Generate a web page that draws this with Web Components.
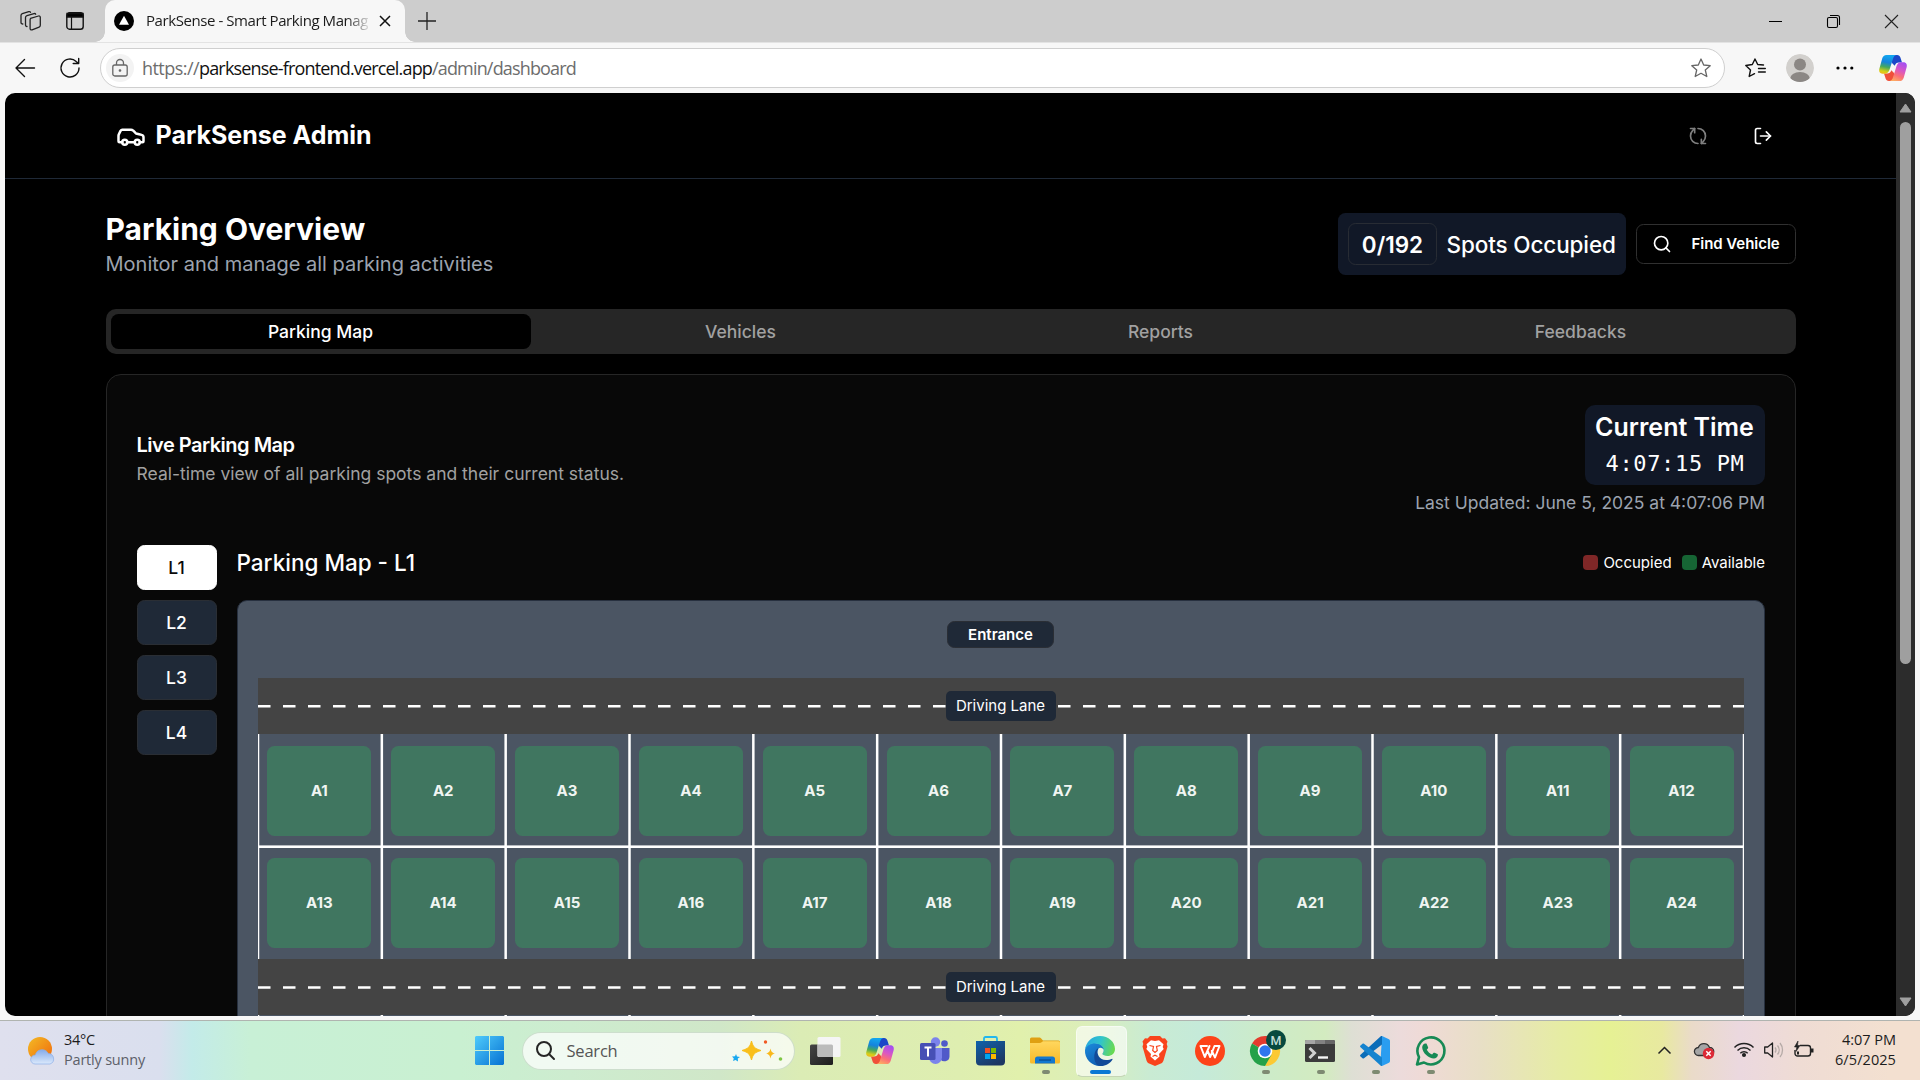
<!DOCTYPE html>
<html lang="en">
<head>
<meta charset="utf-8">
<title>ParkSense - Smart Parking Management</title>
<style>
html,body{margin:0;padding:0;width:1920px;height:1080px;overflow:hidden;background:#f7f7f7}
</style>
</head>
<body>
<desk-top></desk-top>
<script>
function define(name, css, html, ready) {
  const t = document.createElement('template');
  t.innerHTML = '<style>*{box-sizing:border-box}svg{display:block;flex:none;overflow:visible}' + css + '</style>' + html;
  customElements.define(name, class extends HTMLElement {
    connectedCallback() {
      if (this.shadowRoot) return;
      this.attachShadow({mode: 'open'}).appendChild(t.content.cloneNode(true));
      if (ready) ready.call(this, this.shadowRoot);
    }
  });
}

/* A line of text whose letter spacing is tuned so that it spans the width in "w". */
define('fit-text', ':host{display:block;white-space:pre;flex:none}span{display:inline-block}', '<span><slot></slot></span>', function (r) {
  const s = r.querySelector('span'), w = +this.getAttribute('w');
  const n = this.textContent.length;
  s.style.letterSpacing = ((w - s.getBoundingClientRect().width) / n) + 'px';
  this.style.width = w + 'px';
});

const copilot = id => `<svg width="28" height="26" viewBox="0 0 28 26">
<defs><linearGradient id="${id}a" x1="0.3" y1="0" x2="0.1" y2="1"><stop offset="0" stop-color="#12a5ee"/><stop offset=".35" stop-color="#1583dd"/><stop offset=".6" stop-color="#43a85f"/><stop offset=".85" stop-color="#d8cf16"/><stop offset="1" stop-color="#f3b41b"/></linearGradient>
<linearGradient id="${id}b" x1="0.7" y1="0" x2="0.3" y2="1"><stop offset="0" stop-color="#a54ff0"/><stop offset=".4" stop-color="#d957c4"/><stop offset=".7" stop-color="#fb6f77"/><stop offset="1" stop-color="#fdab62"/></linearGradient></defs>
<path d="M12 0h6.200c1.600 0 2.700 1 3.200 2.500l1.600 5h-3c-2.300 0-3.600 1.200-4.300 3.300L13 8z" fill="#1c47c8"/>
<path d="M16 26H9.800c-1.600 0-2.700-1-3.200-2.500L5 18.500h3c2.300 0 3.600-1.200 4.300-3.300L15 18z" fill="#f0503a"/>
<path d="M7.500 0h10c-2 .3-2.900 1.800-3.500 3.800l-3 9.500c-.8 2.500-2 5.400-4.600 5.400H3.500C.9 18.700-.3 16.500.3 14L3.200 3.600C3.900 1.200 5.300 0 7.500 0z" fill="url(#${id}a)"/>
<path d="M20.500 26h-10c2-.3 2.900-1.800 3.500-3.800l3-9.500c.8-2.500 2-5.400 4.600-5.400h2.900c2.600 0 3.800 2.200 3.200 4.700l-2.900 10.400c-.7 2.400-2.100 3.600-4.300 3.600z" fill="url(#${id}b)"/></svg>`;

/* ---------- browser ---------- */
define('browser-tabs', `
:host{display:flex;height:42px;background:#cdcdcd;align-items:center;font:15px "Open Sans","Noto Sans",sans-serif;color:#1b1b1b}
.left{display:flex;width:105px;padding-left:20px;gap:25px;align-items:center}
.tab{display:flex;width:300px;height:42px;background:#f7f7f7;border-radius:10px 10px 0 0;align-items:center;padding:0 0 1px 9px;position:relative}
.tab:before,.tab:after{content:"";position:absolute;bottom:0;width:10px;height:10px}
.tab:before{left:-10px;background:radial-gradient(circle at 0 0,#cdcdcd 9.500px,#f7f7f7 10px)}
.tab:after{right:-10px;background:radial-gradient(circle at 100% 0,#cdcdcd 9.500px,#f7f7f7 10px)}
.t{margin-left:12px;width:222px;overflow:hidden;padding-bottom:2px;-webkit-mask:linear-gradient(90deg,#000 200px,transparent 226px);mask:linear-gradient(90deg,#000 200px,transparent 226px)}
.x{margin-left:11px}.plus{margin-left:13px;margin-bottom:1px}
.left svg{margin-bottom:1px}
.win{margin-left:auto;display:flex;gap:45px;padding-right:22px;align-items:center}`,
`<div class="left">
<svg width="21" height="20" viewBox="0 0 21 20" fill="none" stroke="#222" stroke-width="1.300" stroke-linejoin="round" stroke-linecap="round"><path d="M10.500 7.300l8-2.300c1-.3 1.800.3 1.800 1.300v8c0 1-.4 1.500-1.200 1.800l-7 2.700c-1.200.4-2-.2-2-1.200V8.800c0-.8.2-1.300.9-1.500z"/><path d="M7 15.500c-1 0-1.500-.6-1.500-1.500V6.500C5.500 5.500 6 5 7 4.700L14 2.600c.8-.2 1.400 0 1.700.6"/><path d="M2.800 13c-1.200 0-1.800-.6-1.800-1.500V4.400C1 3.500 1.500 3 2.300 2.700l6.500-2c.8-.2 1.400 0 1.700.6"/></svg>
<svg width="18" height="18" viewBox="0 0 18 18" fill="none" stroke="#111" stroke-width="1.400"><rect x=".8" y=".8" width="16.400" height="16.400" rx="2.800"/><path d="M1 1.500h16V5H1z" fill="#000"/><path d="M5.500 5v12" stroke-width="1.200"/></svg></div>
<div class="tab"><svg width="20" height="20" viewBox="0 0 20 20"><circle cx="10" cy="10" r="10"/><path d="M10 4.800l5 9H5z" fill="#fff"/></svg>
<div class="t"><fit-text w="222">ParkSense - Smart Parking Manag</fit-text></div>
<svg class="x" width="12" height="12" viewBox="0 0 12 12" stroke="#111" stroke-width="1.500"><path d="M1 1l10 10M11 1L1 11"/></svg></div>
<svg class="plus" width="18" height="18" viewBox="0 0 18 18" stroke="#222" stroke-width="1.300"><path d="M9 0v18M0 9h18"/></svg>
<div class="win"><svg width="13" height="13" viewBox="0 0 13 13" stroke="#000" stroke-width="1"><path d="M0 6.500h13"/></svg>
<svg width="13" height="13" viewBox="0 0 13 13" fill="none" stroke="#000" stroke-width="1.100"><rect x=".5" y="2.500" width="10" height="10" rx="1.500"/><path d="M3 .5h7.500c1.200 0 2 .8 2 2V10"/></svg>
<svg width="13" height="13" viewBox="0 0 13 13" stroke="#222" stroke-width="1.100"><path d="M0 0l13 13M13 0L0 13"/></svg></div>`);

define('browser-bar', `
:host{display:flex;height:51px;background:#f7f7f7;align-items:center;padding-left:15px;border-top:1px solid #e3e3e3;font:18px "Open Sans","Noto Sans",sans-serif;color:#111}
.re{margin-left:25px}
.url{margin-left:20px;width:1625px;height:40px;border:1px solid #cfcfcf;border-radius:20px;background:#fff;display:flex;align-items:center;padding:0 13px 0 5px}
.url fit-text{padding-bottom:1px}
.lock{width:28px;height:28px;border-radius:50%;background:#f3f3f3;display:flex;align-items:center;justify-content:center;margin-right:8px}
.g{color:#6d6d6d}.star{margin-left:auto}
.fav{margin-left:20px}.av{margin-left:20px}.dots{margin-left:22px}.cp{margin-left:25px;display:flex}`,
`<svg width="20" height="20" viewBox="0 0 20 20" fill="none" stroke="#111" stroke-width="1.400" stroke-linecap="round" stroke-linejoin="round"><path d="M19.500 10H1M9.500 1.500L1 10l8.500 8.500"/></svg>
<svg class="re" width="20" height="20" viewBox="0 0 20 20" fill="none" stroke="#111" stroke-width="1.400" stroke-linecap="round" stroke-linejoin="round"><path d="M19 10a9 9 0 1 1-2.800-6.500L18.500 5.500M18.700.5v5h-5.500"/></svg>
<div class="url"><div class="lock"><svg width="16" height="18" viewBox="0 0 16 18" fill="none" stroke="#666" stroke-width="1.300"><rect x=".8" y="6" width="14.400" height="11" rx="2"/><path d="M4.500 6V4a3.500 3.500 0 0 1 7 0v2"/><circle cx="8" cy="11.500" r=".7" fill="#666"/></svg></div>
<fit-text w="57" class="g">https://</fit-text><fit-text w="233">parksense-frontend.vercel.app</fit-text><fit-text w="144" class="g">/admin/dashboard</fit-text>
<svg class="star" width="20" height="20" viewBox="0 0 20 20" fill="none" stroke="#666" stroke-width="1.300" stroke-linejoin="round"><path d="M10 1l2.700 6 6.500.7-4.900 4.300 1.500 6.500L10 15.300 4.200 18.500l1.500-6.500L.8 7.700l6.500-.7z"/></svg></div>
<svg class="fav" width="21" height="20" viewBox="0 0 21 20" fill="none" stroke="#111" stroke-width="1.400" stroke-linejoin="round" stroke-linecap="round"><path d="M18.500 7l-5.800-.5L10 1 7.300 6.500.8 7.500 5.500 12 4.200 18.500 9.500 15.700M13.500 10.500h6.800M13.500 14h6.800"/></svg>
<svg class="av" width="28" height="28" viewBox="0 0 28 28"><defs><clipPath id="c"><circle cx="14" cy="14" r="14"/></clipPath></defs><g clip-path="url(#c)"><circle cx="14" cy="14" r="14" fill="#d2d0cd"/><circle cx="14" cy="10.500" r="6" fill="#8b8784"/><ellipse cx="14" cy="25" rx="10" ry="7" fill="#8b8784"/></g></svg>
<svg class="dots" width="18" height="4" viewBox="0 0 18 4"><circle cx="2" cy="2" r="1.600"/><circle cx="9" cy="2" r="1.600"/><circle cx="15.800" cy="2" r="1.600"/></svg>
<span class="cp">${copilot('n')}</span>`);

/* ---------- page ---------- */
define('page-header', `
:host{display:flex;height:86px;border-bottom:1px solid #1f2937;align-items:center;padding:0 123px 0 111px;color:#fff}
h1{margin:0 0 1px 9.500px;font:700 25px/35px Inter,sans-serif}
.r{margin-left:auto;display:flex;gap:45px}`,
`<svg width="30" height="30" viewBox="0 0 24 24" fill="none" stroke="#fff" stroke-width="2" stroke-linecap="round" stroke-linejoin="round"><path d="M19 17h2c.6 0 1-.4 1-1v-3c0-.9-.7-1.700-1.500-1.900C18.700 10.600 16 10 16 10s-1.300-1.400-2.200-2.300c-.5-.4-1.100-.7-1.800-.7H5c-.6 0-1.100.4-1.400.9l-1.400 2.900A3.700 3.700 0 0 0 2 12v4c0 .6.4 1 1 1h2"/><circle cx="7" cy="17" r="2"/><path d="M9 17h6"/><circle cx="17" cy="17" r="2"/></svg>
<h1>ParkSense Admin</h1>
<div class="r"><svg width="20" height="20" viewBox="0 0 24 24" fill="none" stroke="#7f7f7f" stroke-width="2" stroke-linecap="round" stroke-linejoin="round"><g transform="rotate(90 12 12)"><path d="M3 12a9 9 0 0 1 9-9 9.750 9.750 0 0 1 6.740 2.740L21 8"/><path d="M21 3v5h-5"/><path d="M21 12a9 9 0 0 1-9 9 9.750 9.750 0 0 1-6.740-2.740L3 16"/><path d="M8 16H3v5"/></g></svg>
<svg width="20" height="20" viewBox="0 0 24 24" fill="none" stroke="#fff" stroke-width="2" stroke-linecap="round" stroke-linejoin="round"><path d="M9 21H5a2 2 0 0 1-2-2V5a2 2 0 0 1 2-2h4"/><path d="M16 17l5-5-5-5"/><path d="M21 12H9"/></svg></div>`);

define('page-title', `
:host{display:flex;align-items:center;height:62px;margin-top:34px;color:#fff}
h2{margin:0 0 0 -.5px;font:700 30px/40px Inter,sans-serif}
p{margin:0 0 0 -.5px;font:400 20px/30px Inter,sans-serif;color:#9ca3af}
.occ{margin-left:auto;height:62px;width:288px;border-radius:7.500px;background:#111827;display:flex;align-items:center;padding-left:10px;gap:9.500px;font:500 22.500px Inter,sans-serif;white-space:nowrap}
.occ span{letter-spacing:-.13px}
.occ b{width:89px;height:42px;border:1px solid #282c34;border-radius:7.500px;display:flex;align-items:center;justify-content:center;font-weight:600}
.find{margin-left:10px;width:160px;height:40px;border:1px solid #303030;border-radius:7.500px;display:flex;align-items:center;padding:0 0 1px 15px;font:600 15px Inter,sans-serif;gap:19.500px;white-space:nowrap;letter-spacing:-.04px}`,
`<div><h2>Parking Overview</h2><p>Monitor and manage all parking activities</p></div>
<div class="occ"><b>0/192</b><span>Spots Occupied</span></div>
<div class="find"><svg width="20" height="20" viewBox="0 0 24 24" fill="none" stroke="#fff" stroke-width="2" stroke-linecap="round"><circle cx="11" cy="11" r="8"/><path d="M21 21l-4.300-4.300"/></svg><span>Find Vehicle</span></div>`);

define('tab-strip', `
:host{display:grid;grid-template-columns:repeat(4,1fr);height:45px;margin-top:34px;background:#262626;border-radius:10px;padding:5px;font:500 17.500px Inter,sans-serif;color:#a1a1a1}
div{display:flex;align-items:center;justify-content:center;border-radius:7.500px;padding-right:1px}
.on{background:#000;color:#fff}`,
`<div class="on">Parking Map</div><div>Vehicles</div><div>Reports</div><div>Feedbacks</div>`);

define('level-button', `
:host{display:flex;width:80px;height:45px;border-radius:7.500px;background:#1f2937;border:1px solid #2a2e34;color:#fff;align-items:center;justify-content:center;font:500 17.500px Inter,sans-serif;padding-right:1px}
:host([on]){background:#fff;color:#0a0a0a;border-color:#fff}`, `<slot></slot>`);

define('drive-lane', `
:host{display:flex;height:56px;background:#444;align-items:center;justify-content:center;position:relative}
svg{position:absolute;left:0;top:0}
span{position:relative;height:30px;width:110px;background:#1f2937;border-radius:5px;color:#fff;font:400 15px Inter,sans-serif;display:flex;align-items:center;justify-content:center;padding:0 1px 1px 0}`,
`<svg width="1486" height="56"><path stroke="#fff" stroke-width="2.500" stroke-dasharray="12.500 12.500"/></svg><span>Driving Lane</span>`,
function (r) { const y = +this.getAttribute('y') + 1.25; r.querySelector('path').setAttribute('d', 'M0 ' + y + 'H1486'); });

define('parking-spot', `
:host{display:flex;width:104px;height:90px;border-radius:7.500px;background:#407660;color:#f0f5f2;align-items:center;justify-content:center;font:700 15px Inter,sans-serif;padding-bottom:1.500px}`, `<slot></slot>`);

define('spot-block', `
:host{display:block;position:relative;height:225px}
svg{position:absolute;left:0;top:0}
.g{display:grid;grid-template-columns:repeat(12,1fr);grid-template-rows:112px 113px;height:225px;position:relative}
.g div{padding:12px 0 0 9.400px}`,
`<svg width="1486" height="225" fill="#fff"></svg><div class="g"></div>`,
function (r) {
  const p = 1486 / 12; let lines = '<rect x="0" y="0" width="1.250" height="225"/><rect x="1484.750" y="0" width="1.250" height="225"/><rect x="0" y="111.400" width="1486" height="2.600"/>';
  for (let i = 1; i < 12; i++) lines += `<rect x="${i * p - 1.25}" y="0" width="2.500" height="225"/>`;
  r.querySelector('svg').innerHTML = lines;
  let cells = '';
  if (!this.hasAttribute('empty')) for (let i = 1; i <= 24; i++) cells += `<div><parking-spot>A${i}</parking-spot></div>`;
  r.querySelector('.g').innerHTML = cells;
});

define('parking-lot', `
:host{display:flex;flex-direction:column;width:1528px;height:500px;background:#4b5563;border:1px solid #27303f;border-radius:10px;padding:20px 20px 0}
.e{align-self:center;width:107px;height:27px;border-radius:7.500px;background:#1f2937;border:1px solid #2a2e35;color:#fff;font:600 15px Inter,sans-serif;display:flex;align-items:center;justify-content:center;margin:0 1px 30px 0;flex:none}
drive-lane,spot-block{flex:none}`,
`<div class="e">Entrance</div><drive-lane y="27"></drive-lane><spot-block></spot-block><drive-lane y="27.300"></drive-lane><spot-block empty></spot-block>`);

define('map-card', `
:host{display:block;height:800px;margin-top:20px;background:#080808;border:1px solid #262626;border-radius:15px;padding:30px;color:#fff;font-family:Inter,sans-serif}
.top{display:flex;justify-content:space-between;height:111px}
h3{margin:26px 0 0 -.5px;font:600 20px/28px Inter,sans-serif;letter-spacing:-.5px}
p{margin:2px 0 0 -.5px;font:400 17.500px/25px Inter,sans-serif;color:#a1a1a1}
.r{display:flex;flex-direction:column;align-items:flex-end}
.clock{width:180px;height:80px;border-radius:10px;background:#111827;display:flex;flex-direction:column;align-items:center;padding-top:5px}
.clock b{font:600 25px/35px Inter,sans-serif;margin-right:1px}
.clock fit-text{font:22px/37px "DejaVu Sans Mono",monospace}
.upd{font:400 17.500px/25px Inter,sans-serif;color:#9ca3af;margin-top:5px}
.b{display:flex;gap:20px;margin-top:29px}
.lv{display:flex;flex-direction:column;gap:10px}
.h{display:flex;height:35px;align-items:center;margin-bottom:20px;font:500 22.500px Inter,sans-serif}
.h>span{margin-left:-.5px}
.lg{margin-left:auto;display:flex;align-items:center;font:400 15px Inter,sans-serif;gap:10px}
.lg div{display:flex;align-items:center;gap:5px}
i{width:15px;height:15px;border-radius:4px}`,
`<div class="top"><div><h3>Live Parking Map</h3><p>Real-time view of all parking spots and their current status.</p></div>
<div class="r"><div class="clock"><b>Current Time</b><fit-text w="139">4:07:15 PM</fit-text></div><div class="upd">Last Updated: June 5, 2025 at 4:07:06 PM</div></div></div>
<div class="b"><div class="lv"><level-button on>L1</level-button><level-button>L2</level-button><level-button>L3</level-button><level-button>L4</level-button></div>
<div><div class="h"><span>Parking Map - L1</span><div class="lg"><div><i style="background:#7f2727"></i>Occupied</div><div><i style="background:#166534"></i>Available</div></div></div><parking-lot></parking-lot></div></div>`);

define('scroll-rail', `
:host{display:flex;flex-direction:column;width:19px;height:923px;background:#2c2c2c;align-items:center;padding:10px 0 9px}
div{width:11px;height:542px;border-radius:6px;background:#9f9f9f;margin-top:9px}
.d{margin-top:auto}`,
`<svg width="13" height="10" viewBox="0 0 13 10"><path d="M6.500 1L12 9H1z" fill="#9f9f9f" stroke="#9f9f9f" stroke-linejoin="round"/></svg><div></div>
<svg class="d" width="13" height="10" viewBox="0 0 13 10"><path d="M6.500 9L12 1H1z" fill="#9f9f9f" stroke="#9f9f9f" stroke-linejoin="round"/></svg>`);

define('page-view', `
:host{display:flex;width:1910px;height:923px;margin-left:5px;border-radius:10px;overflow:hidden;background:#000}
main{width:1891px}.c{width:1690px;margin-left:101px}`,
`<main><page-header></page-header><div class="c"><page-title></page-title><tab-strip></tab-strip><map-card></map-card></div></main><scroll-rail></scroll-rail>`);

/* ---------- taskbar ---------- */
define('task-icon', `
:host{display:flex;width:55px;height:59px;align-items:center;justify-content:center;position:relative;flex:none}
:host([on]):before{content:"";position:absolute;left:3px;top:5px;width:49px;height:49px;border-radius:6px;background:rgba(255,255,255,.6);border:1px solid rgba(255,255,255,.5);border-bottom-color:#c5d5b6}
:host([dot]):after,:host([on]):after{content:"";position:absolute;left:24px;bottom:6px;width:8px;height:4px;border-radius:2px;background:#7e8a72}
:host([on]):after{left:17px;width:21px;background:#0a78d4}
::slotted(svg){display:block;position:relative;overflow:visible}`, `<slot></slot>`);

define('task-bar', `
:host{display:flex;height:60px;border-top:1px solid #b0b4b0;align-items:center;font:14.500px "Open Sans","Noto Sans",sans-serif;color:#1c1c1c;
background:linear-gradient(90deg,#dfe0ee 0,#dadfee 160px,#c3ebe9 192px,#c8f0d6 250px,#c9f0d1 460px,#cdeccf 570px,#d0e7c8 720px,#dbecb5 800px,#deeeb0 960px,#e1f0ac 1020px,#dbeebb 1090px,#c9ebd3 1150px,#c5ead9 1200px,#cdebc8 1270px,#d3ebc0 1325px,#dedfd4 1352px,#ecdbdb 1400px,#efdad6 1425px,#e8dfc6 1480px,#e6eca4 1560px,#e6f194 1610px,#e8e9a0 1662px,#eadbc9 1692px,#ebd8df 1740px,#efdcd4 1800px,#f3e0d0 1890px)}
.w{display:flex;width:475px;padding-left:28px;gap:8px;align-items:center}
.w fit-text{line-height:20px}
.w div{margin-bottom:2px}
.s{display:flex;width:273px;height:38px;margin:0 3px 0 17.500px;border-radius:19px;background:rgba(255,255,255,.72);border:1px solid rgba(150,180,150,.4);align-items:center;padding:0 11px 0 13px;font-size:16.500px;color:#555}
.s fit-text{margin-left:12px}.s .sp{margin-left:auto}
.tray{margin-left:auto;display:flex;align-items:center;padding-right:24px}
.ck{display:flex;flex-direction:column;align-items:flex-end;line-height:20px;margin:0 0 2px 21px}`,
`<div class="w"><svg width="28" height="28" viewBox="0 0 28 28"><defs><linearGradient id="su" x1="0" y1="0" x2="1" y2="1"><stop offset="0" stop-color="#f3bb25"/><stop offset="1" stop-color="#f0680c"/></linearGradient><linearGradient id="cl" x1="0" y1="0" x2="0" y2="1"><stop offset="0" stop-color="#85abea"/><stop offset="1" stop-color="#dbe9fb"/></linearGradient></defs><circle cx="12" cy="12" r="12" fill="url(#su)"/><path d="M7 27a4.500 4.500 0 0 1 .3-9 7 7 0 0 1 13-1.500A5.400 5.400 0 0 1 22 27z" fill="url(#cl)" stroke="#8dafe8" stroke-width=".7"/></svg>
<div><fit-text w="31">34°C</fit-text><fit-text w="81" style="color:#5c6069">Partly sunny</fit-text></div></div>
<svg width="29" height="29" viewBox="0 0 29 29"><defs><linearGradient id="wn" gradientUnits="userSpaceOnUse" x1="0" y1="0" x2="29" y2="29"><stop offset="0" stop-color="#4fcbfb"/><stop offset="1" stop-color="#0672d3"/></linearGradient></defs><path fill="url(#wn)" d="M1 0h13v14H0V1zM15 0h13l1 1v13H15zM0 15h14v14H1l-1-1zM15 15h14v13l-1 1H15z"/></svg>
<div class="s"><svg width="19" height="19" viewBox="0 0 19 19" fill="none" stroke="#252525" stroke-width="2"><circle cx="8" cy="8" r="7"/><path d="M13 13l5 5" stroke-linecap="round"/></svg><fit-text w="51">Search</fit-text>
<svg class="sp" width="51" height="22" viewBox="0 0 51 22"><path d="M19.500 1c1.600 6 3 7.500 9.500 9.500-6.500 2-7.900 3.500-9.500 9.500-1.600-6-3-7.500-9.500-9.500 6.500-2 7.900-3.500 9.500-9.500z" fill="#f9bf1b" stroke="#f9bf1b" stroke-width="1"/><path d="M38.500 8.500c.8 3.300 1.200 4 4.500 5-3.300 1-3.700 1.700-4.500 5-.8-3.300-1.200-4-4.500-5 3.300-1 3.700-1.700 4.500-5z" fill="#f9b81b"/><path d="M4 14l1 2.500 3 .5-2.200 1.600L6 21.500l-2.500-1.500L1 21l.8-2.500L0 16.500l3-.2z" fill="#18a8f0"/><circle cx="33.500" cy="2" r="1.700" fill="#f15a24"/><circle cx="48.500" cy="19" r="1.800" fill="#7fc743"/></svg></div>
<task-icon><svg width="31" height="28" viewBox="0 0 31 28"><defs><linearGradient id="tv" x1="0" y1="0" x2="1" y2="1"><stop offset="0" stop-color="#454545"/><stop offset="1" stop-color="#1d1d1d"/></linearGradient></defs><rect x="0" y="7.500" width="23" height="20.500" rx="1.500" fill="url(#tv)"/><rect x="7.500" y="0" width="23" height="20" rx="1.500" fill="#f5f5f5"/><path d="M7.500 7.500h14a1.500 1.500 0 0 1 1.500 1.500v11H9a1.500 1.500 0 0 1-1.500-1.500z" fill="#bbb"/></svg></task-icon>
<task-icon>${copilot('t')}</task-icon>
<task-icon><svg width="30" height="28" viewBox="0 0 30 28"><circle cx="15.500" cy="5" r="4.700" fill="#7b83eb"/><circle cx="24.500" cy="6.500" r="3.300" fill="#5059c9"/><path d="M20 11h9.500v8.500a5 5 0 0 1-9.500 2z" fill="#5059c9"/><path d="M9 11h13v9.500a6.500 6.500 0 0 1-13 0z" fill="#7b83eb"/><rect x="0" y="6" width="15.500" height="17" rx="1.500" fill="#4650b5"/><path d="M4.500 10.500h7M8 10.500v9" stroke="#fff" stroke-width="2"/></svg></task-icon>
<task-icon><svg width="29" height="30" viewBox="0 0 29 30"><defs><linearGradient id="st" x1="0" y1="0" x2=".6" y2="1"><stop offset="0" stop-color="#0f62ab"/><stop offset="1" stop-color="#1e3763"/></linearGradient></defs><path d="M8 6V2.500A1.500 1.500 0 0 1 9.500 1h10A1.500 1.500 0 0 1 21 2.500V6" fill="none" stroke="#22b7ee" stroke-width="1.800"/><path d="M0 5h29v20.500a4 4 0 0 1-4 4H4a4 4 0 0 1-4-4z" fill="url(#st)"/><path d="M9 12h5v5H9z" fill="#f25022"/><path d="M15 12h5v5h-5z" fill="#7fba00"/><path d="M9 18h5v5H9z" fill="#00a4ef"/><path d="M15 18h5v5h-5z" fill="#ffb900"/></svg></task-icon>
<task-icon dot><svg width="30" height="27" viewBox="0 0 30 27"><defs><linearGradient id="fo" x1="0" y1="0" x2="0" y2="1"><stop offset="0" stop-color="#ffd75e"/><stop offset="1" stop-color="#f9b928"/></linearGradient></defs><path d="M0 2a1.500 1.500 0 0 1 1.500-1.500h7.500c1 0 1.500.3 2.200 1L13 3.500h15.500A1.500 1.500 0 0 1 30 5v5H0z" fill="#dfa012"/><path d="M0 6h9.500c1 0 1.700-.3 2.500-1l1-.8h15.500A1.500 1.500 0 0 1 30 5.700V25a1.500 1.500 0 0 1-1.500 1.500h-27A1.500 1.500 0 0 1 0 25z" fill="url(#fo)"/><path d="M5 26.500V22a2.500 2.500 0 0 1 2.500-2.500h15A2.500 2.500 0 0 1 25 22v4.500z" fill="#1478cf"/><path d="M9 23h12" stroke="#0a4d92" stroke-width="1.300"/></svg></task-icon>
<task-icon on><svg width="30" height="30" viewBox="0 0 30 30"><defs><linearGradient id="ea" x1="0" y1=".3" x2="1" y2=".5"><stop offset="0" stop-color="#27a7e0"/><stop offset=".5" stop-color="#31c4cb"/><stop offset="1" stop-color="#69da4f"/></linearGradient><linearGradient id="eb" x1="0" y1="0" x2=".7" y2="1"><stop offset="0" stop-color="#1c8bdc"/><stop offset="1" stop-color="#0d57ac"/></linearGradient></defs>
<path d="M15 30A15 15 0 0 1 0 14C1 9 5 7 9.500 7c6 0 10 3.500 10 8 0 2.500-1.500 3-1.500 4.200 0 1.300 2 2.300 5 2.300 2 0 4-.7 5.500-1.700A15 15 0 0 1 15 30z" fill="url(#eb)"/>
<path d="M0 14C.8 6 7 0 15 0c8.500 0 15 6 15 13 0 4.500-3.500 7-7.500 7-3 0-5-1-5-2.200 0-.8 1.200-1.500 1.200-3.800C18.700 10 14.500 7.500 9.500 7.500 5 7.500 1.500 10 0 14z" fill="url(#ea)"/>
<path d="M12.500 12.500C7 17 9 30 15.500 30c5.500 0 9.500-2.500 12-6.500.4-.6 0-1-.6-.7-1.700.8-3.600 1.200-5.900 1.200-5 0-8.500-4-8.500-8 0-1.300.3-2.500 1-3.500z" fill="#124a98"/>
<path d="M13.500 12.500c-2.800 5 1 11.500 7.500 11.500 2.500 0 4.500-.5 6.200-1.300.5-.3 1 .1.600.7L30 21l-1.500-1.800c-1.700 1-3.500 1.600-5.500 1.600-3.500 0-5.500-1.500-5.500-3 0-.8 1.200-1.500 1.200-3.800-.3-1.800-3.500-3-5.200-1.500z" fill="#eef6e2"/></svg></task-icon>
<task-icon><svg width="26" height="30" viewBox="0 0 26 30"><path d="M8 0h10l2.500 2.500 2.500-.3 2.500 3.300-.8 2.500.8 2.500-4 14c-.4 1.300-1 2-2 2.700L13 30l-6.500-2.800c-1-.7-1.600-1.400-2-2.700l-4-14L1.300 8 .5 5.500 3 2.200l2.500.3z" fill="#f9441c"/><path d="M13 5l4-.8 4.500 4-.8 2.800 1 2-4.700 5 .5 2.500L13 24.500l-4.500-4L9 18l-4.700-5 1-2-.8-2.800 4.500-4z" fill="#fff"/><path d="M7.500 9.500l4 1-.8 4L13 16.500l2.300-2-.8-4 4-1M10.500 20.500l2.500-1.300 2.500 1.300" fill="none" stroke="#f9441c" stroke-width="1.200"/></svg></task-icon>
<task-icon><svg width="30" height="30" viewBox="0 0 30 30"><circle cx="15" cy="15" r="15" fill="#fd4319"/><path d="M12 10H5.500l4.300 11L14.500 10M12.500 14.500l2.700 6.500L19.500 10h5L20 21.500l-3.200-6.500" fill="none" stroke="#fff" stroke-width="2" stroke-linejoin="round" stroke-linecap="round"/></svg></task-icon>
<task-icon dot><svg width="30" height="30" viewBox="0 0 30 30"><path d="M15 15L2 7.500A15 15 0 0 1 28 7.500z" fill="#e33b2e"/><path d="M15 0a15 15 0 0 1 13 7.500H15z" fill="#e33b2e"/><path d="M15 15l13-7.500A15 15 0 0 1 15 30l3-6z" fill="#fcc934"/><path d="M15 15L2 7.500A15 15 0 0 0 15 30l6.500-11.300z" fill="#24a148"/><circle cx="15" cy="15" r="7.300" fill="#fff"/><circle cx="15" cy="15" r="5.700" fill="#2f76ee"/><circle cx="26" cy="4" r="10" fill="#07493f"/><text x="26" y="8.600" text-anchor="middle" font-family="Roboto,sans-serif" font-size="12.500" fill="#c3dcd5" font-weight="500">M</text></svg></task-icon>
<task-icon dot><svg width="30" height="22" viewBox="0 0 30 22"><rect width="30" height="22" rx="1.500" fill="#3b3b3b"/><path d="M0 4V1.500A1.500 1.500 0 0 1 1.500 0H10v4z" fill="#a5a5a5"/><path d="M10 0h10v4H10z" fill="#828282"/><path d="M20 0h8.500A1.500 1.500 0 0 1 30 1.500V4H20z" fill="#666"/><path d="M4.500 8l5 5-5 5" fill="none" stroke="#d0d0d0" stroke-width="3"/><path d="M13 17.500h10" stroke="#f5f5f5" stroke-width="2.400"/></svg></task-icon>
<task-icon dot><svg width="30" height="30" viewBox="0 0 30 30"><path d="M22 0l7 3.300c.7.400 1 .9 1 1.700v20c0 .8-.3 1.300-1 1.700L22 30l-1.500-4z" fill="#2a9df0"/><path d="M22 0v8.500L4 22.300c-.5.400-1 .4-1.500 0L.5 20.500c-.6-.5-.6-1.200 0-1.700L20.500.5C21 0 21.500-.1 22 0z" fill="#0b6db8"/><path d="M22 30v-8.500L4 7.700c-.5-.4-1-.4-1.500 0L.5 9.500c-.6.500-.6 1.200 0 1.700l20 18.300c.5.500 1 .6 1.500.5z" fill="#1483cf"/></svg></task-icon>
<task-icon dot><svg width="30" height="30" viewBox="0 0 30 30"><path d="M2 28.500l2-7.300A13.500 13.500 0 1 1 9 26.500z" fill="none" stroke="#178a55" stroke-width="2.600" stroke-linejoin="round"/><path d="M10.500 7.500c.7 0 1 .1 1.300.7l1.300 3c.2.500 0 1-.3 1.300l-1 1.200c1.300 2.300 3 3.800 5.300 4.800l1.300-1.500c.3-.4.700-.4 1.200-.2l2.800 1.300c.5.300.6.500.5 1-.3 2.200-2 3.400-4 3.400-5 0-11.500-5.500-11.700-11 0-2 1.300-4 3.300-4z" fill="#178a55"/></svg></task-icon>
<div class="tray">
<svg width="13" height="7" viewBox="0 0 13 7" fill="none" stroke="#222" stroke-width="1.500"><path d="M.5 6.500l6-6 6 6"/></svg>
<svg width="21" height="17" viewBox="0 0 21 17" style="margin-left:23px"><path d="M4.500 13.500a4 4 0 0 1-.2-8A6 6 0 0 1 15.500 5.500a4 4 0 0 1 .5 8z" fill="#a5a5a5" stroke="#333" stroke-width="1.300"/><circle cx="14.500" cy="11.500" r="5.700" fill="#dc2a36"/><path d="M12.300 9.300l4.400 4.400M16.700 9.300l-4.400 4.400" stroke="#fff" stroke-width="1.500"/></svg>
<svg width="20" height="15" viewBox="0 0 20 15" fill="none" stroke="#222" stroke-width="1.500" style="margin:0 0 2px 19px"><path d="M.5 5.500a13.500 13.500 0 0 1 19 0M3.500 8.500a9.300 9.300 0 0 1 13 0M6.300 11.300a5.300 5.300 0 0 1 7.400 0"/><circle cx="10" cy="13" r="1.300" fill="#222"/></svg>
<svg width="20" height="16" viewBox="0 0 20 16" fill="none" stroke="#222" stroke-width="1.300" stroke-linejoin="round" style="margin:0 0 1px 10px"><path d="M.7 5h3L8.500 1v14l-4.800-4h-3z"/><g stroke="#b5aaa6"><path d="M11 5.500a4 4 0 0 1 0 5M13.500 3.500a7 7 0 0 1 0 9M16 1a11 11 0 0 1 0 14"/></g></svg>
<svg width="20" height="17" viewBox="0 0 20 17" fill="none" stroke="#222" stroke-width="1.400" style="margin:0 0 3px 10px"><path d="M6 4.500h8a2.500 2.500 0 0 1 2.500 2.500v5.500a2.500 2.500 0 0 1-2.500 2.500H3.500A2.500 2.500 0 0 1 1 12.500V9"/><path d="M18 7.500v4" stroke-width="3"/><path d="M4 0L.5 6h2.300L2 10.500 6 4.500H3.500z" fill="#222" stroke-width=".6"/><path d="M4 10.500v3" stroke-width="2"/></svg>
<div class="ck"><fit-text w="54">4:07 PM</fit-text><fit-text w="61">6/5/2025</fit-text></div></div>`);

define('desk-top', `:host{display:flex;flex-direction:column;width:1920px;height:1080px;background:#f7f7f7}task-bar{margin-top:4px}browser-tabs,browser-bar,page-view,task-bar{flex:none}`,
`<browser-tabs></browser-tabs><browser-bar></browser-bar><page-view></page-view><task-bar></task-bar>`);
</script>
</body>
</html>
